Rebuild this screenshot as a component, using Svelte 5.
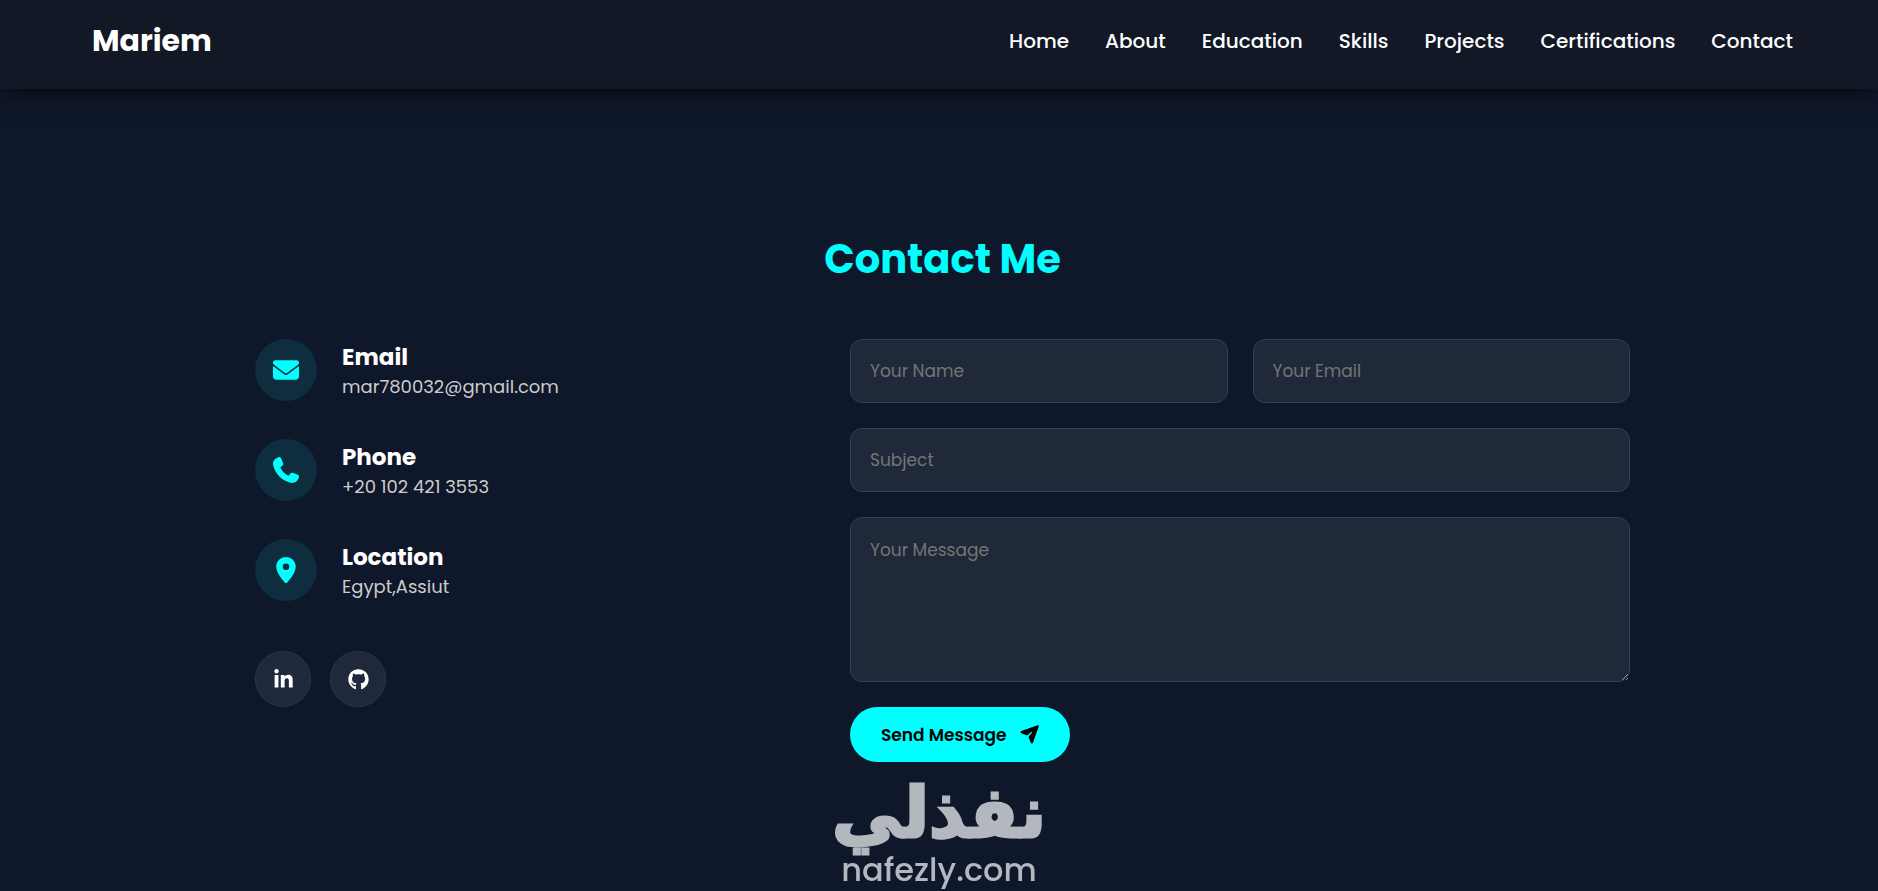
<script>
  const links = ['Home', 'About', 'Education', 'Skills', 'Projects', 'Certifications', 'Contact'];

  const details = [
    {
      title: 'Email',
      text: 'mar780032@gmail.com',
      box: '0 0 512 512',
      path: 'M48 64C21.5 64 0 85.5 0 112c0 15.1 7.1 29.3 19.2 38.4L236.8 313.6c11.4 8.5 27 8.5 38.4 0L492.8 150.4c12.1-9.1 19.2-23.3 19.2-38.4c0-26.5-21.5-48-48-48H48zM0 176V384c0 35.3 28.7 64 64 64H448c35.3 0 64-28.7 64-64V176L294.4 339.2c-22.8 17.1-54 17.1-76.8 0L0 176z'
    },
    {
      title: 'Phone',
      text: '+20 102 421 3553',
      box: '0 0 512 512',
      path: 'M160.2 25C152.3 6.1 131.7-3.9 112.1 1.4l-5.5 1.5c-64.6 17.6-119.8 80.2-103.7 156.4 37.1 175 174.8 312.7 349.8 349.8 76.3 16.2 138.8-39.1 156.4-103.7l1.5-5.5c5.4-19.7-4.7-40.3-23.5-48.1l-97.3-40.5c-16.5-6.9-35.6-2.1-47 11.8l-38.6 47.2C233.9 335.4 177.3 277 144.8 205.3L189 169.3c13.9-11.3 18.6-30.4 11.8-47L160.2 25z'
    },
    {
      title: 'Location',
      text: 'Egypt,Assiut',
      box: '-64 0 512 512',
      path: 'M0 188.6C0 84.4 86 0 192 0S384 84.4 384 188.6c0 119.3-120.2 262.3-170.4 316.8-11.8 12.8-31.5 12.8-43.3 0-50.2-54.5-170.4-197.5-170.4-316.8zM192 256a64 64 0 1 0 0-128 64 64 0 1 0 0 128z'
    }
  ];

  const socials = [
    {
      name: 'LinkedIn',
      box: '0 0 448 512',
      path: 'M100.28 448H7.4V148.9h92.88zM53.79 108.1C24.09 108.1 0 83.5 0 53.8a53.79 53.79 0 0 1 107.58 0c0 29.7-24.1 54.3-53.79 54.3zM447.9 448h-92.68V302.4c0-34.7-.7-79.2-48.29-79.2-48.29 0-55.69 37.7-55.69 76.7V448h-92.78V148.9h89.08v40.8h1.3c12.4-23.5 42.69-48.3 87.88-48.3 94 0 111.28 61.9 111.28 142.3V448z'
    },
    {
      name: 'GitHub',
      box: '0 0 496 512',
      path: 'M165.9 397.4c0 2-2.3 3.6-5.2 3.6-3.3.3-5.6-1.3-5.6-3.6 0-2 2.3-3.6 5.2-3.6 3-.3 5.6 1.3 5.6 3.6zm-31.1-4.5c-.7 2 1.3 4.3 4.3 4.9 2.6 1 5.6 0 6.2-2s-1.3-4.3-4.3-5.2c-2.6-.7-5.5.3-6.2 2.3zm44.2-1.7c-2.9.7-4.9 2.6-4.6 4.9.3 2 2.9 3.3 5.9 2.6 2.9-.7 4.9-2.6 4.6-4.6-.3-1.9-3-3.2-5.9-2.9zM244.8 8C106.1 8 0 113.3 0 252c0 110.9 69.8 205.8 169.5 239.2 12.8 2.3 17.3-5.6 17.3-12.1 0-6.2-.3-40.4-.3-61.4 0 0-70 15-84.7-29.8 0 0-11.4-29.1-27.8-36.6 0 0-22.9-15.7 1.6-15.4 0 0 24.9 2 38.6 25.8 21.9 38.6 58.6 27.5 72.9 20.9 2.3-16 8.8-27.1 16-33.7-55.9-6.2-112.3-14.3-112.3-110.5 0-27.5 7.6-41.3 23.6-58.9-2.6-6.5-11.1-33.3 2.6-67.9 20.9-6.5 69 27 69 27 20-5.6 41.5-8.5 62.8-8.5s42.8 2.9 62.8 8.5c0 0 48.1-33.6 69-27 13.7 34.7 5.2 61.4 2.6 67.9 16 17.7 25.8 31.5 25.8 58.9 0 96.5-58.9 104.2-114.8 110.5 9.2 7.9 17 22.9 17 46.4 0 33.7-.3 75.4-.3 83.6 0 6.5 4.6 14.4 17.3 12.1C428.2 457.8 496 362.9 496 252 496 113.3 383.5 8 244.8 8z'
    }
  ];
</script>

<header>
  <a class="logo" href="#home">Mariem</a>
  <nav>
    {#each links as link}
      <a href="#{link.toLowerCase()}">{link}</a>
    {/each}
  </nav>
</header>

<main>
  <section id="contact">
    <h1>Contact Me</h1>
    <div class="columns">
      <div class="info">
        {#each details as item}
          <div class="detail">
            <span class="badge">
              <svg viewBox={item.box} aria-hidden="true"><path d={item.path} /></svg>
            </span>
            <div>
              <h2>{item.title}</h2>
              <p>{item.text}</p>
            </div>
          </div>
        {/each}
        <div class="socials">
          {#each socials as social}
            <a href="#{social.name.toLowerCase()}" aria-label={social.name}>
              <svg viewBox={social.box} aria-hidden="true"><path d={social.path} /></svg>
            </a>
          {/each}
        </div>
      </div>

      <form onsubmit={(e) => e.preventDefault()}>
        <div class="pair">
          <input type="text" placeholder="Your Name" aria-label="Your Name" />
          <input type="email" placeholder="Your Email" aria-label="Your Email" />
        </div>
        <input type="text" placeholder="Subject" aria-label="Subject" />
        <textarea placeholder="Your Message" aria-label="Your Message"></textarea>
        <button type="submit">
          Send Message
          <svg viewBox="0 -32 576 576" aria-hidden="true">
            <path d="M536.4-26.3c9.8-3.5 20.6-1 28 6.3s9.8 18.2 6.3 28l-178 496.9c-5 13.9-18.1 23.1-32.8 23.1-14.2 0-27-8.6-32.3-21.7l-64.2-158c-4.5-11-2.5-23.6 5.2-32.6l94.5-112.4c5.1-6.1 4.7-15-.9-20.6s-14.6-6-20.6-.9L229.2 276.1c-9.1 7.6-21.6 9.6-32.6 5.2L38.1 216.8c-13.1-5.3-21.7-18.1-21.7-32.3 0-14.7 9.2-27.8 23.1-32.8l496.9-178z" />
          </svg>
        </button>
      </form>
    </div>
  </section>
</main>

<div class="watermark">
  <span class="arabic" lang="ar" dir="rtl">نفذلي</span>
  <span class="domain">nafezly.com</span>
</div>

<style>
  :global(body) {
    background: #0f172a;
    font-family: Poppins, Inter, 'Noto Sans', sans-serif;
    color: #fff;
  }

  header {
    display: flex;
    justify-content: space-between;
    align-items: center;
    box-sizing: border-box;
    min-height: 89px;
    padding: 0 85px 8px 92px;
    background: #121826;
    box-shadow: 0 4px 20px rgba(0, 0, 0, 0.6);
  }

  a {
    color: inherit;
    text-decoration: none;
  }

  .logo {
    font-size: 30px;
    font-weight: 700;
    line-height: 40px;
  }

  nav {
    display: flex;
    gap: 36px;
    font-size: 20px;
    font-weight: 500;
    line-height: 32px;
  }

  main {
    padding: 140px 24px 120px 31px;
  }

  section {
    max-width: 1375px;
    margin: 0 auto;
  }

  h1 {
    margin: 0 0 50px;
    font-size: 40px;
    line-height: 60px;
    font-weight: 700;
    text-align: center;
    color: #00ffff;
  }

  .columns {
    display: grid;
    grid-template-columns: 2fr 3fr;
    gap: 75px;
  }

  .info {
    display: flex;
    flex-direction: column;
    gap: 38px;
  }

  .detail {
    display: flex;
    gap: 25px;
  }

  .badge {
    display: grid;
    place-items: center;
    width: 62px;
    height: 62px;
    border-radius: 50%;
    background: #0e2e3f;
    color: #00ffff;
  }

  svg {
    fill: currentColor;
  }

  .badge svg {
    width: 26px;
    height: 26px;
  }

  h2 {
    margin: 3px 0 0;
    font-size: 23px;
    line-height: 30px;
    font-weight: 700;
  }

  p {
    margin: 0;
    font-size: 18px;
    line-height: 29px;
    color: #cccccc;
  }

  .socials {
    display: flex;
    gap: 19px;
    padding-top: 12px;
  }

  .socials a {
    display: grid;
    place-items: center;
    box-sizing: border-box;
    width: 56px;
    height: 56px;
    border: 1px solid #243b48;
    border-radius: 50%;
    background: #1f293b;
  }

  .socials svg {
    width: 21px;
    height: 21px;
  }

  form {
    display: flex;
    flex-direction: column;
    align-items: flex-start;
    gap: 25px;
  }

  .pair {
    display: grid;
    grid-template-columns: 1fr 1fr;
    gap: 25px;
    width: 100%;
  }

  input,
  textarea {
    box-sizing: border-box;
    width: 100%;
    min-width: 0;
    padding: 18px 19px;
    border: 1px solid #343f50;
    border-radius: 12px;
    background: #1f293a;
    color: #fff;
    font-family: inherit;
    font-size: 17px;
    line-height: 28px;
  }

  input {
    height: 64px;
  }

  textarea {
    height: 165px;
    resize: vertical;
  }

  ::placeholder {
    color: #757575;
    opacity: 1;
  }

  button {
    display: flex;
    align-items: center;
    gap: 13px;
    height: 55px;
    padding: 0 31px;
    border: 0;
    border-radius: 28px;
    background: #00ffff;
    color: #000;
    font-family: inherit;
    font-size: 17px;
    font-weight: 600;
  }

  button svg {
    width: 19px;
    height: 19px;
  }

  .watermark {
    position: fixed;
    left: 50%;
    bottom: 0;
    transform: translateX(-50%);
    display: flex;
    flex-direction: column;
    align-items: center;
    color: #b3b8bf;
    pointer-events: none;
  }

  .arabic {
    font-family: 'DejaVu Sans', sans-serif;
    font-size: 70px;
    font-weight: 700;
    line-height: 72px;
    -webkit-text-stroke: 3px #b3b8bf;
  }

  .domain {
    font-size: 32px;
    font-weight: 500;
    line-height: 42px;
  }
</style>
